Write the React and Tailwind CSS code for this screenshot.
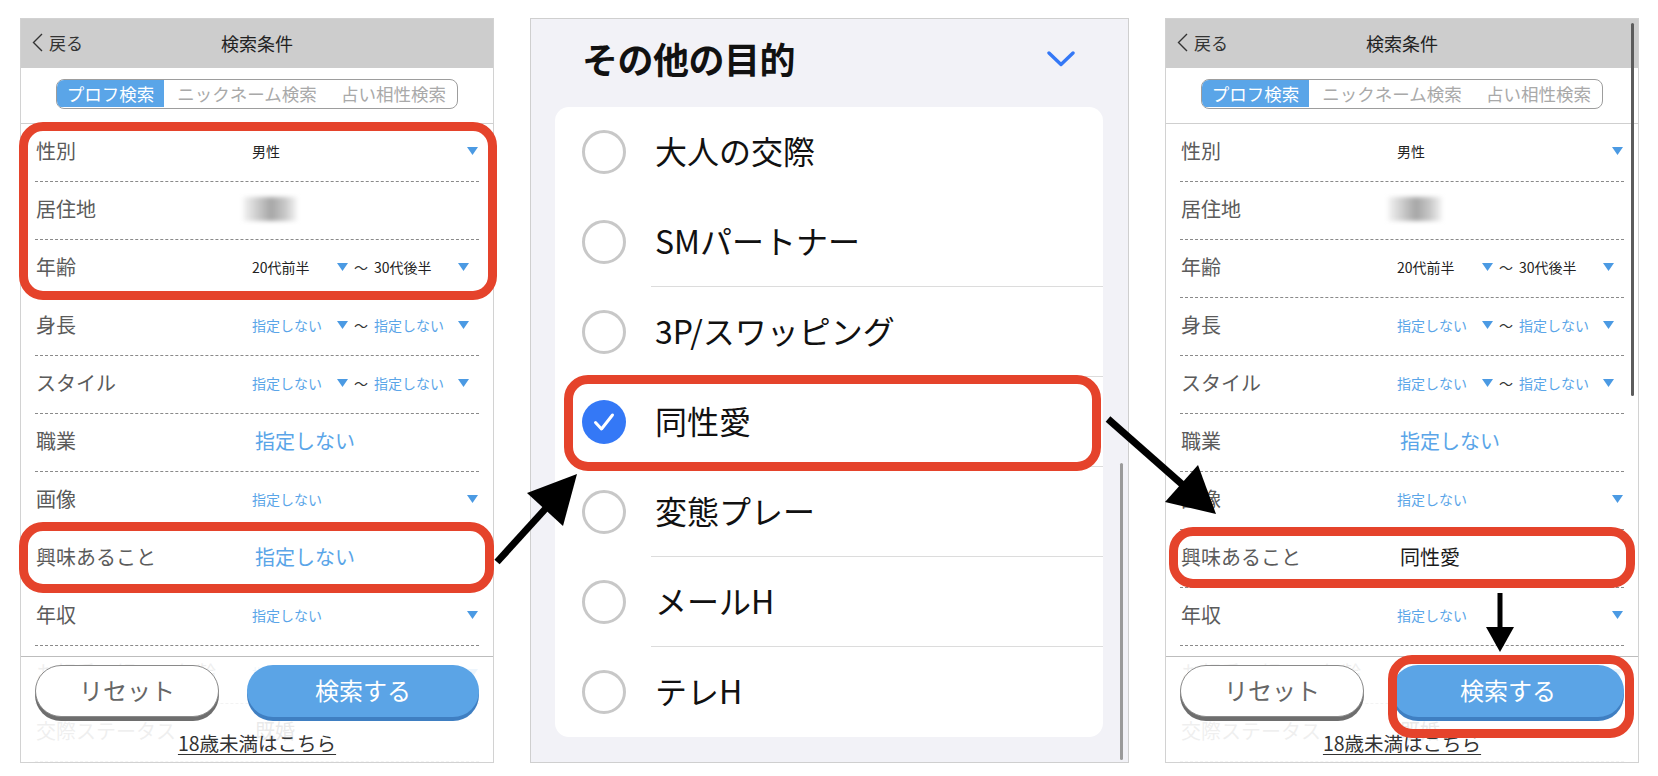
const rows = [
  { label: "性別", type: "select", value: "男性", dark: true },
  { label: "居住地", type: "blur" },
  { label: "年齢", type: "range", from: "20代前半", to: "30代後半", dark: true },
  { label: "身長", type: "range", from: "指定しない", to: "指定しない" },
  { label: "スタイル", type: "range", from: "指定しない", to: "指定しない" },
  { label: "職業", type: "big", value: "指定しない" },
  { label: "画像", type: "select", value: "指定しない" },
  { label: "興味あること", type: "big", value: "指定しない", interest: true },
  { label: "年収", type: "select", value: "指定しない" },
  { label: "お相手の好みの年齢", type: "select", value: "指定しない" },
  { label: "交際ステータス", type: "big", value: "既婚", dark: true },
];

const purposes = [
  { label: "大人の交際" },
  { label: "SMパートナー", line: true },
  { label: "3P/スワッピング", line: true },
  { label: "同性愛", line: true, checked: true },
  { label: "変態プレー", line: true },
  { label: "メールH", line: true },
  { label: "テレH" },
];

function Tri() {
  return (
    <svg width="11" height="8" viewBox="0 0 11 8" className="shrink-0">
      <polygon points="0,0 11,0 5.5,8" fill="#4b9ae3" />
    </svg>
  );
}

function Value({ row, interest }) {
  if (row.type === "blur") {
    return (
      <div className="ml-[-9px] h-[24px] w-[54px] bg-[linear-gradient(90deg,#f4f4f4_0%,#cacaca_28%,#a6a6a6_52%,#c8c8c8_78%,#f4f4f4_100%)] blur-[2px]" />
    );
  }
  if (row.type === "range") {
    const color = row.dark ? "text-[#222]" : "text-[#5aa5e8]";
    return (
      <div className="flex items-center text-[14px] leading-none">
        <span className={`w-[85px] ${color}`}>{row.from}</span>
        <Tri />
        <span className="ml-[6px] w-[13px] text-[#333]">〜</span>
        <span className={`ml-[7px] w-[84px] ${color}`}>{row.to}</span>
        <Tri />
      </div>
    );
  }
  if (row.type === "big") {
    if (row.interest && interest) {
      return <span className="pl-[3px] text-[20px] leading-none text-[#1a1a1a]">{interest}</span>;
    }
    return (
      <span className={`pl-[3px] text-[20px] leading-none ${row.dark ? "text-[#222]" : "text-[#5aa5e8]"}`}>
        {row.value}
      </span>
    );
  }
  return (
    <div className="flex flex-1 items-center pr-[1px]">
      <span className={`flex-1 text-[14px] leading-none ${row.dark ? "text-[#222]" : "text-[#5aa5e8]"}`}>
        {row.value}
      </span>
      <Tri />
    </div>
  );
}

function SearchPanel({ interest, scrollbar, className }) {
  return (
    <div className={`relative h-[745px] w-[474px] shrink-0 overflow-hidden border border-[#d2d2d2] bg-white ${className}`}>
      {/* header */}
      <div className="grid h-[49px] grid-cols-[1fr_auto_1fr] items-center bg-[#cdcdcd] pb-[2px]">
        <div className="flex items-center gap-[6px] pl-[11px]">
          <svg width="11" height="19" viewBox="0 0 11 19">
            <polyline points="10,1 1.5,9.5 10,18" fill="none" stroke="#333" strokeWidth="1.4" />
          </svg>
          <span className="text-[17px] leading-none text-[#333]">戻る</span>
        </div>
        <div className="text-[18px] leading-none text-[#222]">検索条件</div>
        <div />
      </div>

      {/* tabs */}
      <div className="flex h-[56px] justify-center border-b border-[#cfcfcf] pt-[11px]">
        <div className="flex h-[30px] w-[402px] overflow-hidden rounded-[8px] border border-[#9d9d9d] pb-[1px] text-[17.5px] leading-none">
          <div className="flex w-[107px] items-center justify-center bg-[#5aa5e8] text-white">プロフ検索</div>
          <div className="flex w-[166px] items-center justify-center text-[#a9a9a9]">ニックネーム検索</div>
          <div className="flex flex-1 items-center justify-center text-[#a9a9a9]">占い相性検索</div>
        </div>
      </div>

      {/* rows */}
      <div>
        {rows.map((row) => (
          <div
            key={row.label}
            className="mx-[14px] flex h-[58px] items-center border-b border-dashed border-[#8a8a8a] pb-[4px]"
          >
            <span className="w-[217px] shrink-0 pl-[1px] text-[20px] leading-none text-[#5b5b5b]">{row.label}</span>
            <Value row={row} interest={interest} />
          </div>
        ))}
      </div>

      {/* footer */}
      <div className="absolute bottom-0 left-0 right-0 flex h-[106px] flex-col border-t border-[#bdbdbd] bg-white/90 px-[14px] pt-[8px]">
        <div className="flex justify-between">
          <button className="h-[52px] w-[184px] rounded-full border border-[#8a8a8a] bg-white pb-[3px] text-[24px] text-[#666] shadow-[0_4px_0_#6e6e6e]">
            リセット
          </button>
          <button className="h-[52px] w-[232px] rounded-full bg-[#5ba4e6] pb-[3px] text-[24px] text-white shadow-[0_4px_0_#3f7fc2]">
            検索する
          </button>
        </div>
        <div className="mt-[14px] text-center text-[19.5px] leading-[24px] text-[#333] underline underline-offset-[3px]">
          18歳未満はこちら
        </div>
      </div>

      {scrollbar && <div className="absolute right-[4px] top-[4px] h-[373px] w-[3px] rounded-full bg-[#5c5c5c]" />}
    </div>
  );
}

function Radio({ checked }) {
  if (checked) {
    return (
      <svg width="44" height="44" viewBox="0 0 44 44" className="shrink-0">
        <circle cx="22" cy="22" r="22" fill="#3478f6" />
        <polyline points="13.5,22.5 19.5,29 30.5,15" fill="none" stroke="#fff" strokeWidth="3" strokeLinecap="round" strokeLinejoin="round" />
      </svg>
    );
  }
  return <div className="h-[44px] w-[44px] shrink-0 rounded-full border-[3px] border-[#c8c8c8]" />;
}

function PurposePanel() {
  return (
    <div className="relative ml-[36px] h-[745px] w-[599px] shrink-0 border border-[#cfcfcf] bg-[#f2f2f7]">
      <div className="flex h-[88px] items-center justify-between pb-[10px] pl-[51px] pr-[53px]">
        <h2 className="text-[36px] font-bold leading-none tracking-[-0.5px] text-[#111]">その他の目的</h2>
        <svg width="28" height="16" viewBox="0 0 28 16" className="mt-[2px]">
          <polyline points="2,2 14,13.5 26,2" fill="none" stroke="#3478f6" strokeWidth="3.4" strokeLinecap="round" strokeLinejoin="round" />
        </svg>
      </div>
      <div className="ml-[24px] mr-[25px] overflow-hidden rounded-[14px] bg-white">
        {purposes.map((p) => (
          <div key={p.label} className="flex h-[90px] items-center pl-[27px]">
            <Radio checked={p.checked} />
            <div
              className={`ml-[25px] flex h-full flex-1 items-center pb-[4px] pl-[4px] text-[32px] leading-none text-[#111] ${
                p.line ? "border-b border-[#dcdcdc]" : ""
              }`}
            >
              {p.label}
            </div>
          </div>
        ))}
      </div>
      <div className="absolute left-[589px] top-[444px] h-[297px] w-[3px] rounded-full bg-[#9a9a9a]" />
    </div>
  );
}

export default function App() {
  return (
    <div className="relative h-[776px] w-[1658px] overflow-hidden bg-white font-['Noto_Sans_CJK_JP',sans-serif]">
      <div className="flex items-start pl-[20px] pt-[18px]">
        <SearchPanel />
        <PurposePanel />
        <SearchPanel className="ml-[36px]" interest="同性愛" scrollbar />
      </div>

      {/* annotations */}
      <div className="absolute left-[19px] top-[122px] h-[178px] w-[478px] rounded-[24px] border-[9px] border-[#e5432b]" />
      <div className="absolute left-[19px] top-[522px] h-[71px] w-[475px] rounded-[24px] border-[9px] border-[#e5432b]" />
      <div className="absolute left-[564px] top-[375px] h-[96px] w-[537px] rounded-[24px] border-[9px] border-[#e5432b]" />
      <div className="absolute left-[1169px] top-[527px] h-[61px] w-[466px] rounded-[24px] border-[9px] border-[#e5432b]" />
      <div className="absolute left-[1388px] top-[655px] h-[83px] w-[246px] rounded-[24px] border-[9px] border-[#e5432b]" />

      <svg className="pointer-events-none absolute inset-0" width="1658" height="776" viewBox="0 0 1658 776">
        <line x1="497" y1="562" x2="548" y2="506" stroke="#000" strokeWidth="7" />
        <polygon points="577,474 527,493 563,526" fill="#000" />
        <line x1="1108" y1="419" x2="1184" y2="486" stroke="#000" strokeWidth="7" />
        <polygon points="1216,514 1165,502 1198,465" fill="#000" />
        <line x1="1500" y1="593" x2="1500" y2="630" stroke="#000" strokeWidth="5" />
        <polygon points="1500,652 1486,627 1514,627" fill="#000" />
      </svg>
    </div>
  );
}
